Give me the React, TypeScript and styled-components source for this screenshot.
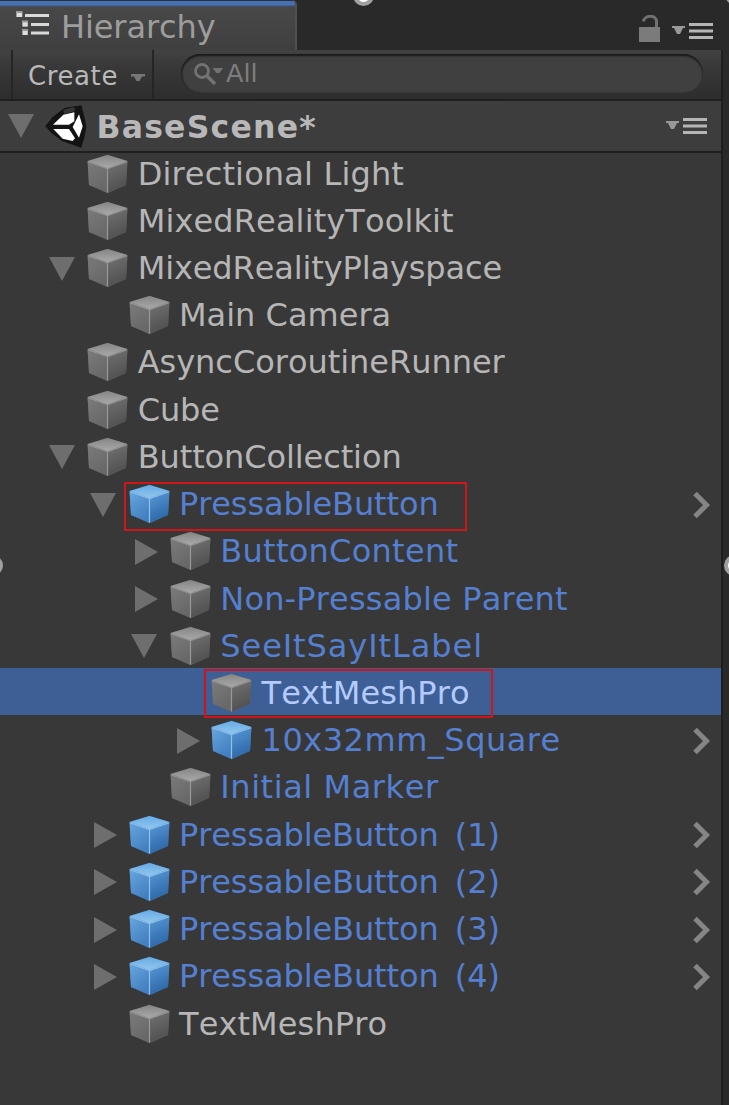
import React from "react";
import styled, { createGlobalStyle } from "styled-components";

const GlobalStyle = createGlobalStyle`
  html, body { margin: 0; background: #383838; }
  body { font-family: "DejaVu Sans", sans-serif; font-kerning: none; color: #b6b6b6; overflow: hidden; }
`;

const Window = styled.div`
  position: relative;
  width: 729px;
  height: 1105px;
  overflow: hidden;
  display: flex;
  flex-direction: column;
  background: #292929;
`;
const TabBar = styled.header`
  flex: none;
  height: 50px;
  display: flex;
  justify-content: space-between;
`;
const Tab = styled.div`
  box-sizing: border-box;
  width: 297px;
  height: 50px;
  padding: 0 0 0 16px;
  display: flex;
  align-items: flex-start;
  background: linear-gradient(#2b303c 0 1px, #4571b0 1px 5px, #3d5478 6px, #484848 7px, #3f3f3f 50px);
  border-right: 2px solid #505050;
  border-radius: 0 5px 0 0;
`;
const TabTitle = styled.span`
  margin: 8px 0 0 11px;
  font-size: 32px;
  line-height: 38px;
  letter-spacing: -0.1px;
  color: #9d9d9d;
`;
const TabActions = styled.div`
  display: flex;
  align-items: flex-start;
  padding: 15px 16px 0 0;
`;
const TabMenu = styled.div`
  margin-top: 8px;
  line-height: 0;
`;
const Panel = styled.main`
  flex: 1;
  min-height: 0;
  width: 721px;
  display: flex;
  flex-direction: column;
  background: #383838;
  border-right: 2px solid #1e1e1e;
`;
const Toolbar = styled.div`
  flex: none;
  box-sizing: border-box;
  height: 51px;
  display: flex;
  border-bottom: 2px solid #1f1f1f;
  background: linear-gradient(#424242, #393939 15px, #2d2d2d);
`;
const CreateButton = styled.button`
  box-sizing: border-box;
  width: 143px;
  margin: 0 0 0 11px;
  padding: 2px 6px 0 15px;
  display: flex;
  align-items: center;
  justify-content: space-between;
  border: solid #252525;
  border-width: 0 2px;
  background: none;
  color: #b9b9b9;
  font: 26px/46px "DejaVu Sans", sans-serif;
  letter-spacing: 0.6px;
`;
const SearchField = styled.div`
  box-sizing: border-box;
  width: 522px;
  height: 39px;
  margin: 4px 0 0 27px;
  padding: 0 0 0 12px;
  display: flex;
  align-items: center;
  gap: 2px;
  border-radius: 20px;
  background: #404040;
  box-shadow: inset 0 2px 2px #191919, inset 1px 0 2px #242424;
  color: #7d7d7d;
  font-size: 25.5px;
  line-height: 30px;
`;
const SearchHint = styled.span`
  margin-top: -1px;
`;
const SceneHeader = styled.div`
  flex: none;
  box-sizing: border-box;
  height: 52px;
  padding: 0 14px 0 8px;
  display: flex;
  align-items: center;
  border-bottom: 2px solid #1f1f1f;
  background: #3d3d3d;
`;
const SceneName = styled.span`
  flex: 1;
  margin: 2px 0 0 9.5px;
  font-size: 31.5px;
  line-height: 38px;
  font-weight: bold;
  letter-spacing: 1.2px;
  color: #b8b8b8;
`;
const Tree = styled.div`
  flex: 1;
  min-height: 0;
  margin-top: -4.5px;
`;
const Row = styled.div<{ $level: number; $selected?: boolean }>`
  position: relative;
  box-sizing: border-box;
  height: 47.23px;
  padding: 0 10px 0 ${(p) => 48.7 + p.$level * 41.3}px;
  display: flex;
  align-items: center;
  background: ${(p) => (p.$selected ? "#3e5f96" : "transparent")};
`;
const ArrowSlot = styled.span`
  flex: none;
  width: 38.5px;
  height: 26px;
  margin-top: 4px;
`;
const Label = styled.span<{ $tone: Tone; $spacing: number }>`
  flex: 1;
  margin: 3px 0 0 9.5px;
  font-size: 32px;
  line-height: 38px;
  white-space: pre;
  letter-spacing: ${(p) => p.$spacing}px;
  color: ${(p) => tones[p.$tone]};
`;
const Highlight = styled.div<{ $left: number; $top: number; $width: number }>`
  position: absolute;
  box-sizing: border-box;
  left: ${(p) => p.$left}px;
  top: ${(p) => p.$top}px;
  width: ${(p) => p.$width}px;
  height: 49px;
  border: 2px solid #d01518;
  z-index: 1;
`;
const Handle = styled.i<{ $x: number; $y: number }>`
  position: absolute;
  box-sizing: border-box;
  left: ${(p) => p.$x - 10.5}px;
  top: ${(p) => p.$y - 10.5}px;
  width: 21px;
  height: 21px;
  border: 4px solid #a0a0a0;
  border-radius: 50%;
  background: #fff;
`;
const CubeSvg = styled.svg`
  flex: none;
  margin-top: 3px;
`;
const Count = styled.span`
  margin-left: 6px;
`;

const tones = { plain: "#b6b6b6", prefab: "#557fd0", active: "#b3cbff" };
type Tone = keyof typeof tones;

const Cube = ({ blue }: { blue?: boolean }) => {
  const id = blue ? "b" : "g";
  return (
    <CubeSvg width="41" height="40" viewBox="0 0 41 40">
      <defs>
        <linearGradient id={id + "t"} x1="0" y1="0" x2="0" y2="1">
          <stop stopColor={blue ? "#66aae5" : "#858585"} />
          <stop offset="1" stopColor={blue ? "#94c8ef" : "#aaaaaa"} />
        </linearGradient>
        <linearGradient id={id + "l"} x1="0" y1="0" x2="0.5" y2="1">
          <stop stopColor={blue ? "#68a7df" : "#7b7b7b"} />
          <stop offset="1" stopColor={blue ? "#4280c0" : "#686868"} />
        </linearGradient>
        <linearGradient id={id + "r"} x1="0" y1="0" x2="0.3" y2="1">
          <stop stopColor={blue ? "#599bd8" : "#737373"} />
          <stop offset="1" stopColor={blue ? "#2e67a7" : "#505050"} />
        </linearGradient>
      </defs>
      <path d="M.5 7 20.500 .8 40.500 7 39 31 20.500 39.300 2 31Z" fill={blue ? "#3c77b5" : "#606060"} />
      <path d="M.6 7.200 20.500 14.700V38.600L2 31Z" fill={`url(#${id}l)`} />
      <path d="M40.400 7.200 20.500 14.700V38.600L39 31Z" fill={`url(#${id}r)`} />
      <path d="M.6 7 20.500 1 40.400 7 20.500 14.300Z" fill={`url(#${id}t)`} />
      <path d="M1 7.800 20.500 14.700 40 7.800M20.500 14.700V38.500" fill="none" stroke={blue ? "#8fc1ea" : "#989898"} strokeWidth="1.2" />
    </CubeSvg>
  );
};

const ArrowSvg = styled.svg`
  display: block;
`;
const Arrow = ({ open }: { open: boolean }) => (
  <ArrowSvg width="27" height="26" viewBox="0 0 27 26">
    <path d={open ? "M0 1H26L13 25Z" : "M4 0V26L27 13Z"} fill="#6e6e6e" />
  </ArrowSvg>
);

const ChevronSvg = styled.svg`
  margin-top: 4px;
`;
const Chevron = () => (
  <ChevronSvg width="19" height="28" viewBox="0 0 19 28">
    <path d="M3 2.500 14.500 14 3 25.500" fill="none" stroke="#858585" strokeWidth="5" />
  </ChevronSvg>
);

const MenuIcon = () => (
  <svg width="42" height="16" viewBox="0 0 42 16">
    <path d="M1 3H14V5H12L9 11H6L3 5H1Z" fill="#989898" />
    <path d="M18 1.500H42M18 8H42M18 14.500H42" stroke="#b5b5b5" strokeWidth="3" />
  </svg>
);

const HierarchySvg = styled.svg`
  margin-top: 11px;
`;
const HierarchyIcon = () => (
  <HierarchySvg width="34" height="25" viewBox="0 0 34 25">
    <path d="M9 4.500H33M15 13.500H33M15 22H33" stroke="#d9d9d9" strokeWidth="3" />
    <path d="M0 0H6.500V6H0ZM6 9.500H12V15.500H6ZM6 18H12V24H6Z" fill="#9b9b9b" />
    <path d="M1 2H6V6H1ZM7 11.500H11.500V15.500H7ZM7 20H11.500V24H7Z" fill="#dedede" />
  </HierarchySvg>
);

const LockSvg = styled.svg`
  margin-right: 10px;
`;
const LockIcon = () => (
  <LockSvg width="22" height="28" viewBox="0 0 22 28">
    <path d="M4.500 6.500C5 0 18 -1 17.500 7V13" fill="none" stroke="#707070" strokeWidth="3" />
    <path d="M0 12H21V27H0Z" fill="#7b7b7b" />
  </LockSvg>
);

const SearchIcon = () => (
  <svg width="31" height="24" viewBox="0 0 31 24">
    <circle cx="9" cy="9" r="6.500" fill="none" stroke="#727272" strokeWidth="2.800" />
    <path d="M14 14 22 22" stroke="#727272" strokeWidth="3.500" />
    <path d="M19.500 6H30L26.500 11H23.500Z" fill="#727272" />
  </svg>
);

const LogoSvg = styled.svg`
  flex: none;
  margin-left: 10px;
`;
const UnityLogo = () => (
  <LogoSvg width="42" height="44" viewBox="0 0 126 132">
    <path d="M1 67 22 40 58 12 109 4 119 42 124 69 119 96 109 131 52 112 20 88Z" fill="#131313" />
    <path d="M54 18 82 10 91 13 88 22 58 30Z" fill="#353535" />
    <path d="M24 62 55 32 88 25V52L72 62ZM25 75H72L90 103 83 111 53 104ZM102 31 113 67 102 101 83 69Z" fill="#fff" />
  </LogoSvg>
);

const DropArrowSvg = styled.svg`
  margin-top: 4px;
`;

interface Item {
  name: string;
  level: number;
  spacing: number;
  count?: number;
  open?: boolean;
  blue?: boolean;
  tone?: Tone;
  mark?: [number, number, number];
}

const items: Item[] = [
  { name: "Directional Light", level: 0, spacing: 0.15 },
  { name: "MixedRealityToolkit", level: 0, spacing: 0.12 },
  { name: "MixedRealityPlayspace", level: 0, spacing: -0.12, open: true },
  { name: "Main Camera", level: 1, spacing: 0 },
  { name: "AsyncCoroutineRunner", level: 0, spacing: -0.03 },
  { name: "Cube", level: 0, spacing: -0.1 },
  { name: "ButtonCollection", level: 0, spacing: -0.1, open: true },
  { name: "PressableButton", level: 1, spacing: -0.1, open: true, blue: true, tone: "prefab", mark: [124, 3, 343] },
  { name: "ButtonContent", level: 2, spacing: 0.27, open: false, tone: "prefab" },
  { name: "Non-Pressable Parent", level: 2, spacing: 0.17, open: false, tone: "prefab" },
  { name: "SeeItSayItLabel", level: 2, spacing: 0.92, open: true, tone: "prefab" },
  { name: "TextMeshPro", level: 3, spacing: 0.1, tone: "active", mark: [204, 1, 289] },
  { name: "10x32mm_Square", level: 3, spacing: 0.5, open: false, blue: true, tone: "prefab" },
  { name: "Initial Marker", level: 2, spacing: 0.56, tone: "prefab" },
  { name: "PressableButton", count: 1, level: 1, spacing: -0.1, open: false, blue: true, tone: "prefab" },
  { name: "PressableButton", count: 2, level: 1, spacing: -0.1, open: false, blue: true, tone: "prefab" },
  { name: "PressableButton", count: 3, level: 1, spacing: -0.1, open: false, blue: true, tone: "prefab" },
  { name: "PressableButton", count: 4, level: 1, spacing: -0.1, open: false, blue: true, tone: "prefab" },
  { name: "TextMeshPro", level: 1, spacing: 0.1 },
];

export default function App() {
  return (
    <Window>
      <GlobalStyle />
      <TabBar>
        <Tab>
          <HierarchyIcon />
          <TabTitle>Hierarchy</TabTitle>
        </Tab>
        <TabActions>
          <LockIcon />
          <TabMenu><MenuIcon /></TabMenu>
        </TabActions>
      </TabBar>
      <Panel>
        <Toolbar>
          <CreateButton>
            Create
            <DropArrowSvg width="16" height="10" viewBox="0 0 16 10">
              <path d="M1 1H15V3.500H12L9.500 8H6.500L4 3.500H1Z" fill="#777" />
            </DropArrowSvg>
          </CreateButton>
          <SearchField>
            <SearchIcon />
            <SearchHint>All</SearchHint>
          </SearchField>
        </Toolbar>
        <SceneHeader>
          <Arrow open />
          <UnityLogo />
          <SceneName>BaseScene*</SceneName>
          <MenuIcon />
        </SceneHeader>
        <Tree>
          {items.map((item, i) => (
            <Row key={i} $level={item.level} $selected={item.tone === "active"}>
              <ArrowSlot>{item.open !== undefined && <Arrow open={item.open} />}</ArrowSlot>
              <Cube blue={item.blue} />
              <Label $tone={item.tone ?? "plain"} $spacing={item.spacing}>
                {item.name}
                {item.count && <Count>{` (${item.count})`}</Count>}
              </Label>
              {item.blue && <Chevron />}
              {item.mark && <Highlight $left={item.mark[0]} $top={item.mark[1]} $width={item.mark[2]} />}
            </Row>
          ))}
        </Tree>
      </Panel>
      <Handle $x={363.5} $y={-5} />
      <Handle $x={-8} $y={565} />
      <Handle $x={734} $y={565} />
      <Handle $x={735} $y={-6} />
    </Window>
  );
}
